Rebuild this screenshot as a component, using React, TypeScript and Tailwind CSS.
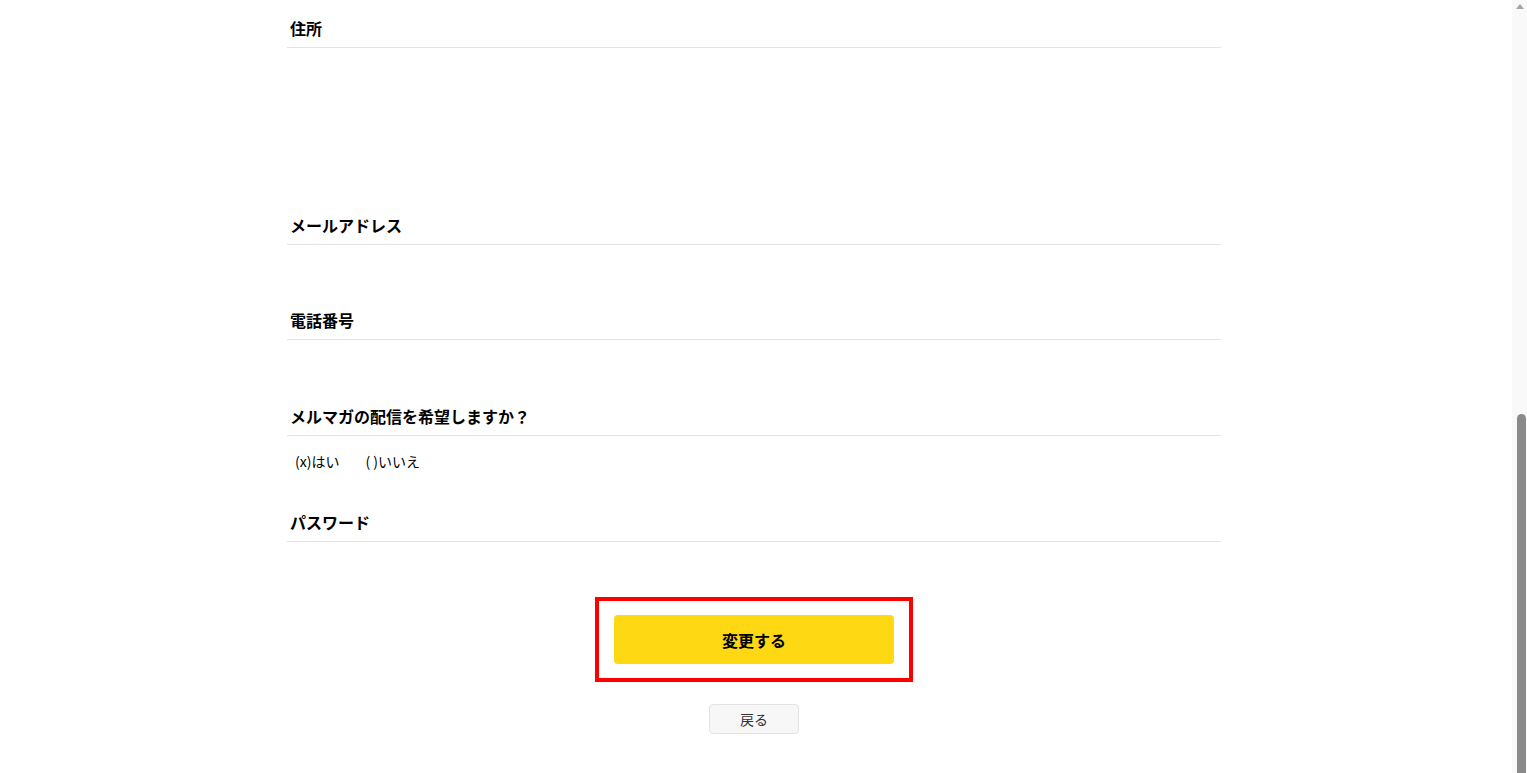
const font = { fontFamily: '"Noto Sans CJK JP", "Noto Sans", sans-serif' };

type Section = { label: string; body: number; content?: React.ReactNode };

function Heading({ label }: { label: string }) {
  return (
    <h3 className="px-[3px] pb-[7px] text-base leading-6 font-bold text-black border-b border-[#e3e3e3]">
      {label}
    </h3>
  );
}

export default function App() {
  const sections: Section[] = [
    { label: '住所', body: 165 },
    { label: 'メールアドレス', body: 63 },
    { label: '電話番号', body: 64 },
    {
      label: 'メルマガの配信を希望しますか？',
      body: 74,
      content: (
        <div className="flex gap-[26px] pl-2 pt-[15px] text-sm leading-5 text-black">
          <span>(x)はい</span>
          <span>(&nbsp;)いいえ</span>
        </div>
      ),
    },
    { label: 'パスワード', body: 55 },
  ];

  return (
    <div className="flex h-[773px] w-full overflow-hidden bg-white" style={font}>
      <main className="flex-1 pr-1">
        <div className="mx-auto w-[934px] pt-4">
          {sections.map((s) => (
            <section key={s.label}>
              <Heading label={s.label} />
              <div style={{ height: s.body }}>{s.content}</div>
            </section>
          ))}

          <div className="flex flex-col items-center">
            <div className="border-4 border-[#ff0000] px-[15px] py-[14px]">
              <button className="flex h-[49px] w-[280px] items-center justify-center rounded bg-[#ffd814] text-base font-bold text-black">
                変更する
              </button>
            </div>
            <button className="mt-[22px] flex h-[30px] w-[90px] items-center justify-center rounded border border-[#e3e3e3] bg-[#f7f7f7] text-sm text-[#333]">
              戻る
            </button>
          </div>
        </div>
      </main>

      {/* browser scrollbar */}
      <div className="flex h-full w-[15px] flex-col bg-[#f9f9f9]">
        <div className="flex h-[15px] items-start justify-center pt-[4px]">
          <svg width="8" height="5" viewBox="0 0 8 5">
            <path d="M4 0 L8 5 L0 5 Z" fill="#a3a3a3" />
          </svg>
        </div>
        <div className="flex-1" />
        <div className="ml-[5px] h-[359px] w-[9px] rounded-t-full bg-[#8a8a8a]" />
      </div>
    </div>
  );
}
